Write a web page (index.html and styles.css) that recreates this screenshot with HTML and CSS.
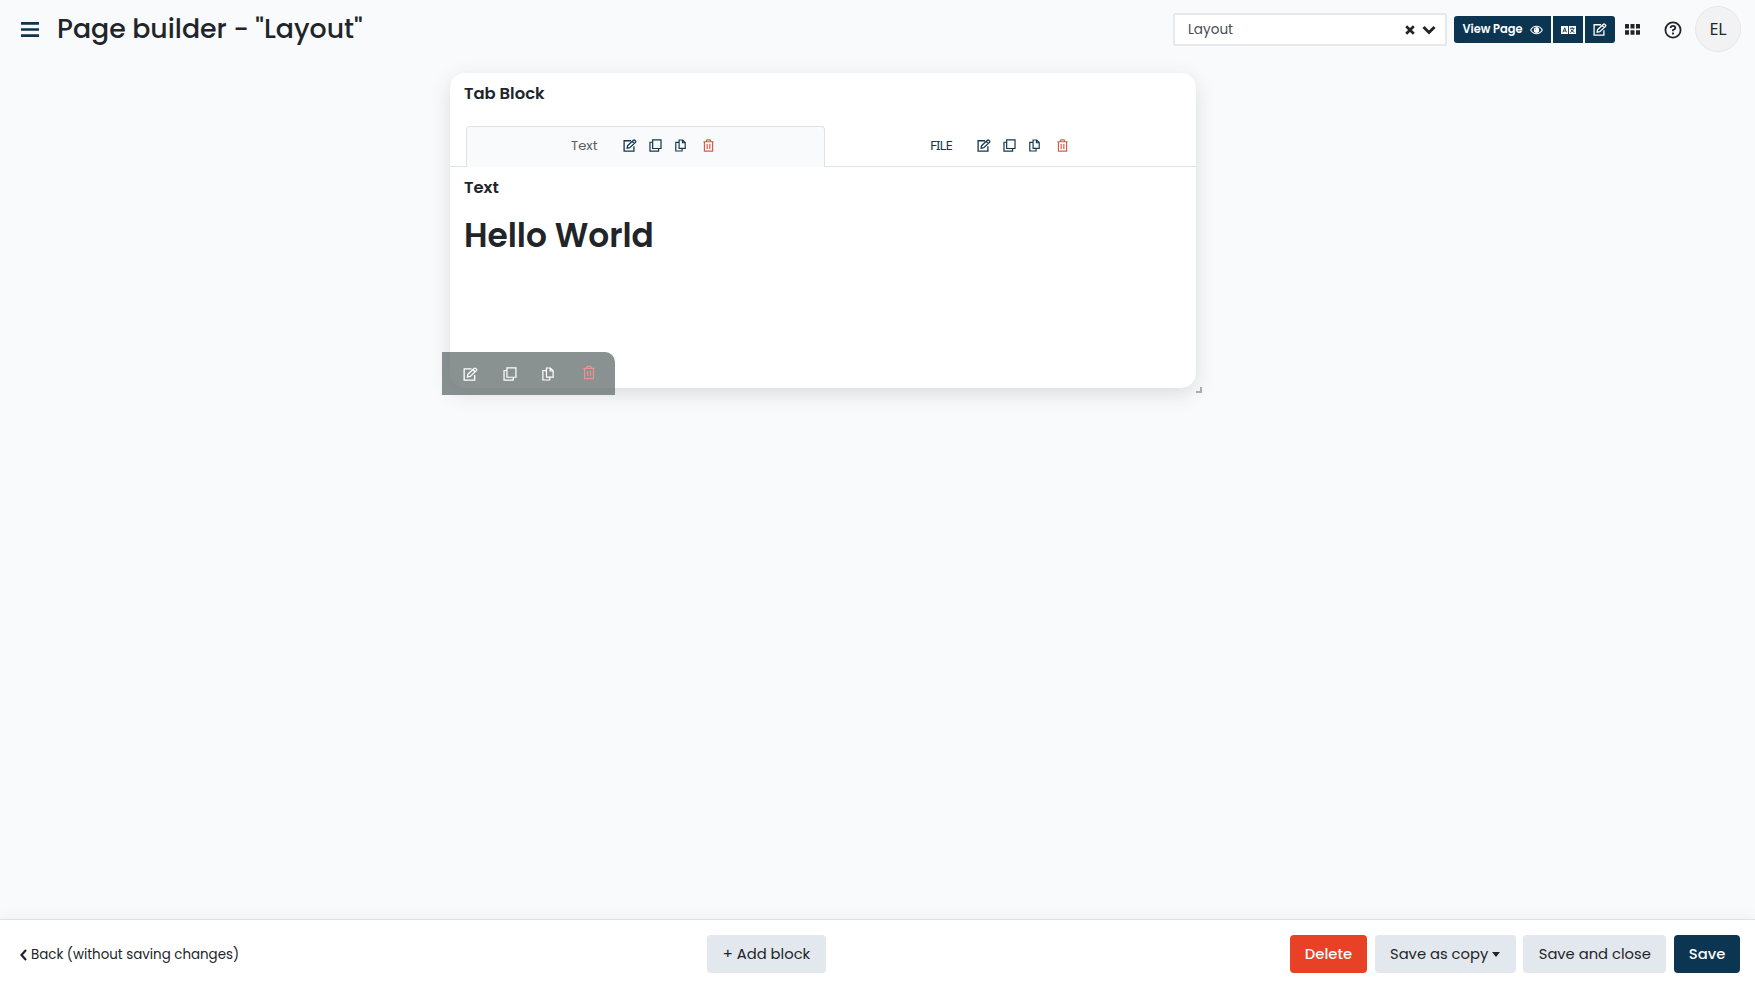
FILE: index.html
```html
<!DOCTYPE html>
<html lang="en">
<head>
<meta charset="utf-8">
<title>Page builder</title>
<link rel="stylesheet" href="styles.css">
</head>
<body>
<svg class="sprite" aria-hidden="true">
  <symbol id="edit" viewBox="0 0 16 15"><path d="M9.2 2H1.2v12h11.3V8.5M5.2 7.8 11.9 1.5q.8-.7 1.6 0l.8.8q.7.8 0 1.6L7.8 10.1l-3.1.5zM10.6 2.9 13 5.3"/></symbol>
  <symbol id="clone" viewBox="0 0 16 16"><path d="M4.5 1h10.3v10.7H4.5zM4.3 4H1.2v11h10.6v-3"/></symbol>
  <symbol id="copy" viewBox="0 0 14 16"><path d="M5.2 1h4.6l3.2 3.2v7.5H5.2zM9.5 1v3.5H13M5 4H1v11h8v-3"/></symbol>
  <symbol id="trash" viewBox="0 0 14 16"><path d="M.5 3.2h13M4 3l1-2.2h4L10 3M1.8 3.5v11.7h10.4V3.5M5.3 6v6.5M8.7 6v6.5"/></symbol>
</svg>
<div class="page">
  <header class="header">
    <svg class="menu" viewBox="0 0 18 15"><path d="M0 1.4h18M0 7.5h18M0 13.6h18"/></svg>
    <h1 class="title">Page builder - "Layout"</h1>
    <div class="select">
      <span class="select-value">Layout</span>
      <svg class="clear" viewBox="0 0 10 10"><path d="m1.2 1.2 7.6 7.6m0-7.6L1.2 8.8"/></svg>
      <svg class="caret" viewBox="0 0 14 10"><path d="m1.5 2 5.5 5.5L12.5 2"/></svg>
    </div>
    <div class="actions">
      <button class="action view"><span>View Page</span><svg class="eye" viewBox="0 0 14 10"><path d="M.7 5Q3 1 7 1t6.3 4Q11 9 7 9T.7 5z"/><circle cx="7" cy="5" r="2.3"/><path d="M7 2.7A2.3 2.3 0 1 1 4.7 5L7 5z" class="pupil"/></svg></button>
      <button class="action"><svg class="lang" viewBox="0 0 15 8"><path class="plate" d="M0 0h15v8H0z"/><path d="M2 6.3 3.7 1.7 5.4 6.3M2.6 5h2.2M7.5 0v8M9 2.3h4.5M11.2 1.2v1M12.8 2.5q-1 3-3.5 4M9.8 3.5q1 2 3.5 3"/></svg></button>
      <button class="action last"><svg class="icon edit"><use href="#edit"/></svg></button>
    </div>
    <svg class="apps" viewBox="0 0 15 11"><path d="M0 .6q0-.6.6-.6h2.8q.6 0 .6.6v3.9H0zM5.5 0h4v4.6h-4zM11 0h3.4q.6 0 .6.6v4h-4zM0 6.2h4v4.6H.6q-.6 0-.6-.6zM5.5 6.2h4v4.6h-4zM11 6.2h4v4q0 .6-.6.6H11z"/></svg>
    <svg class="help" viewBox="0 0 18 18"><circle cx="9" cy="9" r="7.6"/><path d="M6.6 7Q6.7 4.9 9 4.9t2.3 2Q11.3 8.1 9 9v1.2M9 11.5v1.9"/></svg>
    <div class="avatar">EL</div>
  </header>

  <main class="canvas">
    <section class="card">
      <h2 class="block-title">Tab Block</h2>
      <div class="tabs">
        <div class="tab active"><span class="tab-name">Text</span>
          <svg class="icon edit"><use href="#edit"/></svg><svg class="icon clone"><use href="#clone"/></svg><svg class="icon copy"><use href="#copy"/></svg><svg class="icon trash"><use href="#trash"/></svg></div>
        <div class="tab"><span class="tab-name file">FILE</span>
          <svg class="icon edit"><use href="#edit"/></svg><svg class="icon clone"><use href="#clone"/></svg><svg class="icon copy"><use href="#copy"/></svg><svg class="icon trash"><use href="#trash"/></svg></div>
      </div>
      <h2 class="inner-title">Text</h2>
      <p class="hello">Hello World</p>
      <div class="toolbar">
        <svg class="icon edit"><use href="#edit"/></svg><svg class="icon clone"><use href="#clone"/></svg><svg class="icon copy"><use href="#copy"/></svg><svg class="icon trash"><use href="#trash"/></svg>
      </div>
      <span class="resize"></span>
    </section>
  </main>

  <footer class="footer">
    <a class="back"><svg viewBox="0 0 7 12"><path d="M6 1 1.5 6 6 11"/></svg><span>Back (without saving changes)</span></a>
    <button class="btn add">+ Add block</button>
    <div class="group">
      <button class="btn delete">Delete</button>
      <button class="btn save-copy"><span>Save as copy</span><i class="drop"></i></button>
      <button class="btn save-close">Save and close</button>
      <button class="btn save">Save</button>
    </div>
  </footer>
</div>
</body>
</html>
```
FILE: styles.css
```css
* { box-sizing: border-box; }
body { margin: 0; background: #f9fafc; color: #212529; font-family: Poppins, Inter, "Open Sans", sans-serif; }
h1, h2, p { margin: 0; }
button { border: 0; padding: 0; font: inherit; color: inherit; }
svg { display: block; flex: none; fill: none; stroke: currentColor; }
span, h1, h2, button { white-space: nowrap; }
.sprite { position: absolute; width: 0; height: 0; }
.page { height: 987px; display: flex; flex-direction: column; overflow: hidden; }

.header { height: 59px; display: flex; align-items: center; padding-left: 21px; }
.menu { width: 18px; height: 15px; stroke: #0b3550; stroke-width: 2.6; }
.title { margin: -1px 0 0 18px; width: 1116px; font-size: 26.8px; font-weight: 500; line-height: 40px; word-spacing: -.6px; }
.select { width: 274px; height: 33px; border: 2px solid #e5e9ee; border-radius: 3px; background: #fff; display: flex; align-items: center; padding: 0 9px 0 13px; color: #484d52; font-size: 13.6px; }
.select-value { flex: 1; font-weight: 400; }
.clear { width: 10px; height: 10px; stroke: #212529; stroke-width: 2.7; }
.caret { width: 14px; height: 10px; margin-left: 7px; stroke: #212529; stroke-width: 3; }
.actions { display: flex; gap: 2px; margin-left: 7px; }
.action { height: 27px; width: 30px; display: flex; align-items: center; justify-content: center; color: #fff; background: #0b3550; font-size: 11.4px; font-weight: 600; }
.view { width: 97px; border-radius: 3px 0 0 3px; gap: 7px; }
.last { border-radius: 0 3px 3px 0; }
.eye { width: 13px; height: 10px; stroke-width: 1.1; }
.pupil { fill: #fff; }
.lang { width: 15px; height: 8px; stroke: #0b3550; stroke-width: .9; }
.plate { fill: #fff; stroke: none; }
.icon { stroke-width: 1.5; }
.edit { width: 14px; height: 13px; }
.clone { width: 13px; height: 13px; }
.copy { width: 11px; height: 13px; }
.trash { width: 11px; height: 13px; color: #db5a45; }
.apps { width: 15px; height: 11px; margin-left: 10px; fill: #212529; stroke: none; }
.help { width: 18px; height: 18px; margin-left: 24px; stroke-width: 1.8; }
.avatar { width: 46px; height: 46px; margin: -1px 0 0 13px; border: 1px solid #e5e7ea; border-radius: 50%; background: #f2f2f2; font: 16px/44px "Noto Sans", sans-serif; text-align: center; letter-spacing: -.2px; }

.canvas { flex: 1; padding: 14px 0 0 450px; }
.card { position: relative; width: 746px; height: 315px; background: #fff; border-radius: 15px; box-shadow: 0 6px 20px rgba(40, 60, 60, .15); }
.block-title { height: 53px; padding: 9px 14px 0; font-size: 16.4px; line-height: 24px; font-weight: 600; }
.tabs { height: 41px; display: flex; padding-left: 16px; background: linear-gradient(#dee2e6, #dee2e6) bottom / 100% 1px no-repeat; }
.tab { width: 359px; display: flex; align-items: center; padding: 1px 0 4px 104px; color: #14384e; }
.tab.active { border: 1px solid #dee2e6; border-bottom: 0; border-radius: 4px 4px 0 0; background: #f9fafc; }
.tab:not(.active) { padding-left: 105px; }
.tab-name { width: 52px; font-size: 13.2px; font-weight: 400; color: #596067; }
.file { width: 47px; color: #14384e; font-family: "Noto Sans", sans-serif; letter-spacing: -.9px; }
.tab .clone { margin-left: 12px; }
.tab .copy { margin-left: 13px; }
.tab .trash { margin-left: 17px; }
.inner-title { padding: 9px 14px 0; font-size: 16.4px; line-height: 24px; font-weight: 600; }
.hello { padding: 12px 14px 0; font-size: 32.8px; line-height: 48px; font-weight: 600; }
.toolbar { position: absolute; left: -8px; top: 279px; width: 173px; height: 43px; padding: 1px 0 0 21px; display: flex; align-items: center; color: #fff; background: rgba(107, 117, 117, .8); border-radius: 0 10px 0 0; }
.toolbar .icon { stroke-width: 1.4; }
.toolbar .edit { width: 15px; height: 14px; }
.toolbar .clone { width: 14px; height: 14px; margin-left: 25px; }
.toolbar .copy { width: 12px; height: 14px; margin-left: 25px; }
.toolbar .trash { width: 12px; height: 15px; margin: 0 0 3px 29px; color: #eb9489; }
.resize { position: absolute; left: 746px; top: 314px; width: 6px; height: 6px; border: solid #a9abad; border-width: 0 2px 2px 0; }

.footer { height: 68px; display: flex; align-items: center; padding: 0 15px 0 20px; background: #fff; border-top: 1px solid #dee2e6; box-shadow: 0 -3px 12px rgba(0, 0, 0, .04); }
.back { width: 687px; display: flex; align-items: center; gap: 4px; font-size: 13.4px; padding-top: 2px; }
.back svg { width: 7px; height: 12px; stroke-width: 2.2; }
.btn { height: 38px; padding-top: 1px; border-radius: 4px; background: #e3e8ee; font-size: 14.75px; display: flex; align-items: center; justify-content: center; }
.add { width: 119px; }
.group { margin-left: auto; display: flex; gap: 7.7px; }
.delete { width: 77px; background: #e74225; color: #fff; font-weight: 500; }
.save-copy { width: 141px; gap: 4px; }
.drop { border: solid transparent; border-width: 5px 4px 0; border-top-color: #212529; }
.save-close { width: 143px; }
.save { width: 66px; background: #0b3550; color: #fff; font-weight: 500; }
```
